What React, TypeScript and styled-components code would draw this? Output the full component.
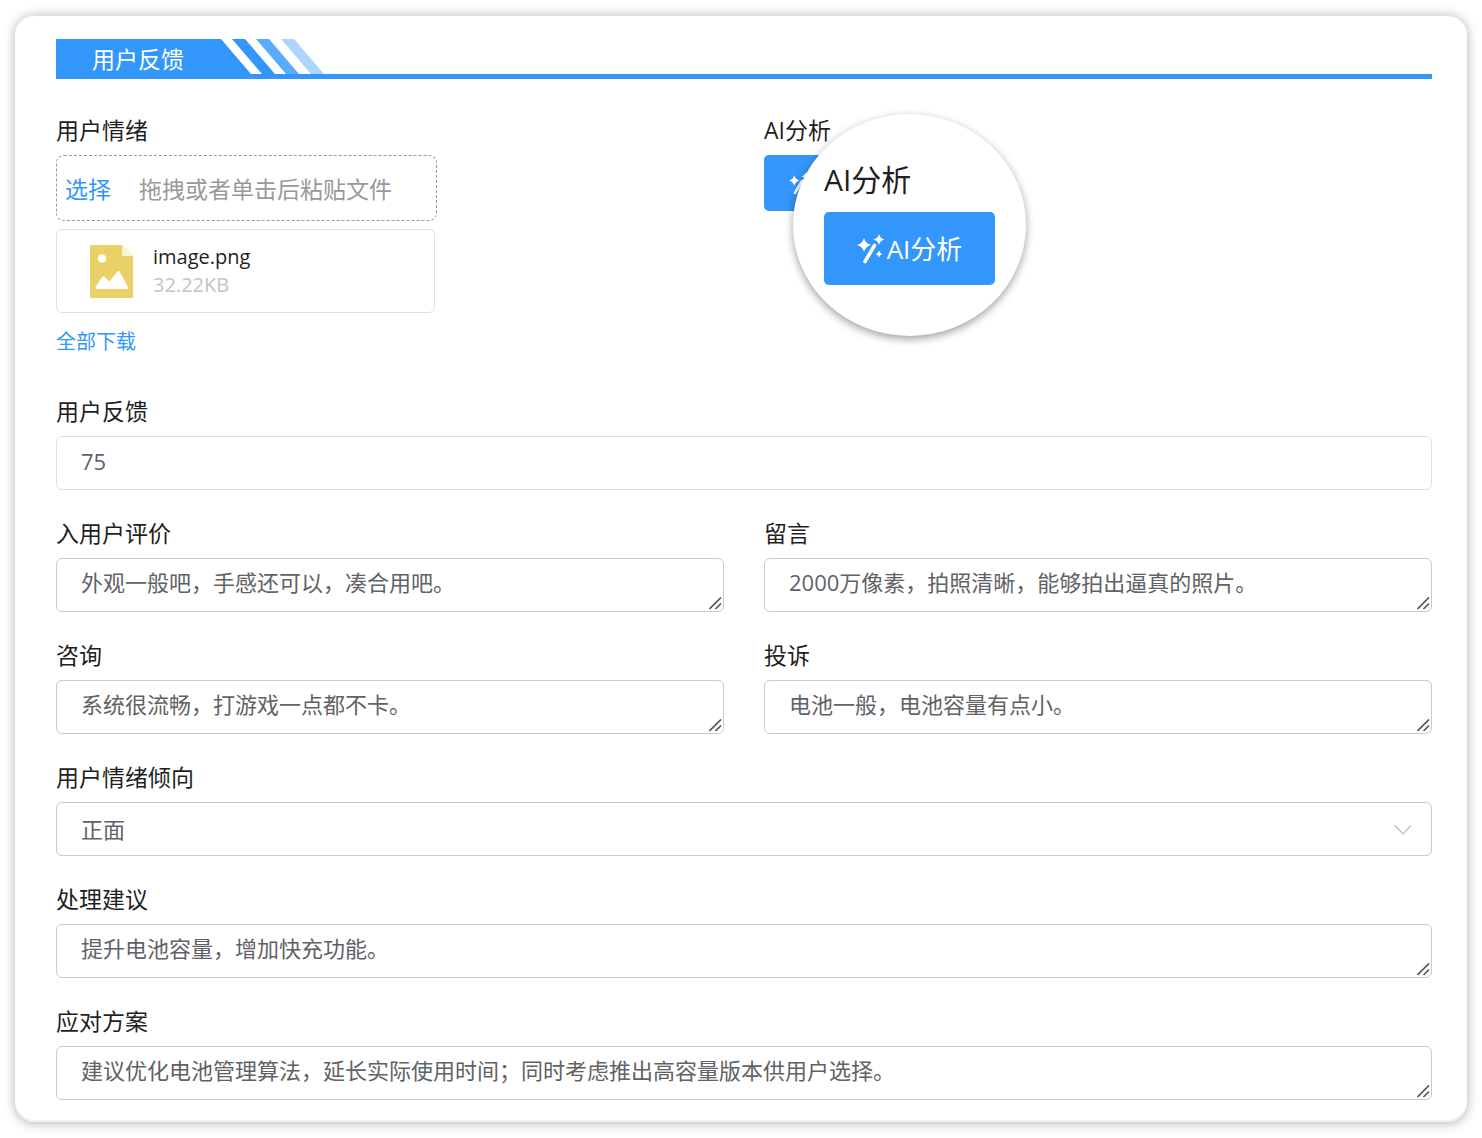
import React, { useId, useState } from 'react';
import styled, { createGlobalStyle, css } from 'styled-components';

const BLUE = '#3296fa';
const FONT = `'Open Sans', 'Noto Sans CJK SC', sans-serif`;

const GlobalStyle = createGlobalStyle`
  *, *::before, *::after { box-sizing: border-box; }
  body { margin: 0; background: #fff; font-family: ${FONT}; color: #1f1f1f; }
  button, input, select, textarea { font-family: inherit; margin: 0; }
`;

const Page = styled.div`
  padding: 15px;
`;

const Card = styled.main`
  padding: 24px 35px 22px 41px;
  border-radius: 20px;
  background: #fff;
  box-shadow: 0 1px 12px rgba(0, 0, 0, 0.32), inset 0 2px 0 -1px #e4e4e4, inset 0 -2px 0 #f0f0f4;
`;

const SectionHeader = styled.header`
  display: flex;
  height: 40px;
  margin-bottom: 36px;
  border-bottom: 5px solid ${BLUE};
`;

const SectionTitle = styled.h1`
  margin: 0;
  width: 196px;
  height: 40px;
  padding-left: 36px;
  background: ${BLUE};
  clip-path: polygon(0 0, 165px 0, 195px 35px, 195px 40px, 0 40px);
  color: #fff;
  font-size: 23px;
  font-weight: 400;
  line-height: 40px;
`;

const Stripes = styled.svg`
  display: block;
  width: 93px;
  height: 35px;
  margin-left: -20px;
`;

const Form = styled.form`
  display: grid;
  grid-template-columns: repeat(2, minmax(0, 1fr));
  gap: 28px 40px;
`;

const FieldBox = styled.div<{ $wide?: boolean }>`
  position: relative;
  display: flex;
  flex-direction: column;
  align-items: flex-start;
  gap: 8px;
  min-width: 0;
  ${(p) => p.$wide && css`grid-column: 1 / -1;`}
`;

const labelText = css`
  padding-bottom: 2px;
  font-size: 23px;
  line-height: 30px;
  color: #1f1f1f;
`;

const Label = styled.label`
  ${labelText}
`;

const GroupLabel = styled.span`
  ${labelText}
`;

const ControlWrap = styled.div`
  position: relative;
  display: flex;
  width: 100%;
`;

const controlStyle = css`
  display: block;
  width: 100%;
  height: 54px;
  padding: 8px 24px 12px;
  border: 1px solid #c4cadc;
  border-radius: 6px;
  outline: 0;
  background: #fff;
  color: #606266;
  font-size: 22px;
  line-height: 30px;
  &:focus { border-color: ${BLUE}; }
`;

const TextInput = styled.input`
  ${controlStyle}
  border-color: #dcdfe6;
`;

const TextArea = styled.textarea`
  ${controlStyle}
  resize: vertical;
  overflow: hidden;
  &::-webkit-resizer { display: none; }
`;

const Select = styled.select`
  ${controlStyle}
  padding: 10px 24px;
  appearance: none;
`;

const Grip = styled.svg`
  position: absolute;
  right: 2px;
  bottom: 2px;
  width: 13px;
  height: 13px;
  pointer-events: none;
`;

const Chevron = styled.svg`
  position: absolute;
  top: 18px;
  right: 19px;
  width: 20px;
  height: 20px;
  pointer-events: none;
`;

const DropZone = styled.div`
  display: flex;
  align-items: center;
  gap: 28px;
  width: 381px;
  max-width: 100%;
  height: 66px;
  padding: 2px 8px 0;
  border: 1px dashed #999;
  border-radius: 8px;
  color: #999;
  font-size: 23px;
  line-height: 32px;
  white-space: nowrap;
`;

const PickButton = styled.button`
  padding: 0;
  border: 0;
  background: none;
  color: ${BLUE};
  font-size: 23px;
  line-height: 32px;
  cursor: pointer;
`;

const FileCard = styled.div`
  display: flex;
  align-items: center;
  gap: 20px;
  width: 379px;
  max-width: 100%;
  height: 84px;
  padding: 0 33px;
  border: 1px solid #dcdfe6;
  border-radius: 6px;
`;

const FileIcon = styled.svg`
  display: block;
  width: 43px;
  height: 54px;
`;

const FileText = styled.div`
  display: flex;
  flex-direction: column;
  font-size: 20px;
  line-height: 28px;
`;

const FileSize = styled.span`
  color: #c0c4cc;
`;

const DownloadLink = styled.a`
  padding: 5px 0 10px;
  color: ${BLUE};
  font-size: 20px;
  line-height: 32px;
  text-decoration: none;
`;

const AiButton = styled.button<{ $large?: boolean }>`
  display: flex;
  align-items: center;
  justify-content: center;
  gap: 2px;
  width: ${(p) => (p.$large ? 171 : 131)}px;
  height: ${(p) => (p.$large ? 73 : 56)}px;
  padding: 0;
  border: 0;
  border-radius: 5px;
  background: ${BLUE};
  color: #fff;
  font-size: ${(p) => (p.$large ? 26 : 20)}px;
  line-height: 32px;
  cursor: pointer;
`;

const WandSvg = styled.svg<{ $large?: boolean }>`
  width: ${(p) => (p.$large ? 28 : 21)}px;
  height: ${(p) => (p.$large ? 30 : 23)}px;
`;

const Lens = styled.div`
  position: absolute;
  top: -1px;
  left: 29px;
  display: flex;
  flex-direction: column;
  align-items: flex-start;
  gap: 12px;
  width: 233px;
  height: 222px;
  padding: 46px 0 0 31px;
  border-radius: 50%;
  background: #fff;
  box-shadow: 0 3px 8px rgba(0, 0, 0, 0.38);
`;

const LensTitle = styled.span`
  color: #1f1f1f;
  font-size: 30px;
  line-height: 40px;
`;

function WandIcon({ large }: { large?: boolean }) {
  return (
    <WandSvg $large={large} viewBox="0 0 28 30" aria-hidden="true">
      <path
        fill="#fff"
        d="M7 4Q8.500 9.500 14 11Q8.500 12.500 7 18Q5.500 12.500 0 11Q5.500 9.500 7 4ZM22 0Q23 4.500 27.500 5.500Q23 6.500 22 11Q21 6.500 16.500 5.500Q21 4.500 22 0ZM22 16.500Q22.800 19.200 25.500 20Q22.800 20.800 22 23.500Q21.200 20.800 18.500 20Q21.200 19.200 22 16.500Z"
      />
      <path d="M17.500 11.500L8 27.500" stroke="#fff" strokeWidth="3.600" strokeLinecap="round" />
    </WandSvg>
  );
}

function AreaField({ label, value, wide }: { label: string; value: string; wide?: boolean }) {
  const id = useId();
  const [text, setText] = useState(value);
  return (
    <FieldBox $wide={wide}>
      <Label htmlFor={id}>{label}</Label>
      <ControlWrap>
        <TextArea id={id} rows={1} value={text} onChange={(e) => setText(e.target.value)} />
        <Grip viewBox="0 0 13 13" aria-hidden="true">
          <path d="M.5 12L12 .5M6.500 12L12 6.500" fill="none" stroke="#555" strokeWidth="1.700" />
        </Grip>
      </ControlWrap>
    </FieldBox>
  );
}

export default function App() {
  const [score, setScore] = useState('75');
  const [mood, setMood] = useState('正面');

  return (
    <>
      <GlobalStyle />
      <Page>
        <Card>
          <SectionHeader>
            <SectionTitle>用户反馈</SectionTitle>
            <Stripes viewBox="0 0 93 35" aria-hidden="true">
              <path d="M0 0H13L43 35H30Z" fill={BLUE} />
              <path d="M24 0H37L67 35H54Z" fill="#5babfb" />
              <path d="M49 0H62L92 35H79Z" fill="#add5fd" />
            </Stripes>
          </SectionHeader>

          <Form onSubmit={(e) => e.preventDefault()}>
            <FieldBox>
              <GroupLabel>用户情绪</GroupLabel>
              <DropZone>
                <PickButton type="button">选择</PickButton>
                <span>拖拽或者单击后粘贴文件</span>
              </DropZone>
              <FileCard>
                <FileIcon viewBox="0 0 43 54" aria-hidden="true">
                  <path d="M1 1H32L43 12V53Q43 54 42 54H1Q0 54 0 53V2Q0 1 1 1Z" fill="#e9d168" />
                  <path d="M32 1L43 12H33Q32 12 32 11Z" fill="#fdf3cd" />
                  <circle cx="12" cy="14.500" r="4.200" fill="#fff" />
                  <path d="M5.500 43L12 33Q13 31.500 14.200 32.800L19.500 37.500L27.500 27.500Q28.500 26 29.500 27.500L38 43Q38.500 45 37 45H6.500Q5 45 5.500 43Z" fill="#fff" />
                </FileIcon>
                <FileText>
                  <span>image.png</span>
                  <FileSize>32.22KB</FileSize>
                </FileText>
              </FileCard>
              <DownloadLink href="#download">全部下载</DownloadLink>
            </FieldBox>

            <FieldBox>
              <GroupLabel>AI分析</GroupLabel>
              <AiButton type="button">
                <WandIcon />
                AI分析
              </AiButton>
              <Lens>
                <LensTitle>AI分析</LensTitle>
                <AiButton type="button" $large>
                  <WandIcon large />
                  AI分析
                </AiButton>
              </Lens>
            </FieldBox>

            <FieldBox $wide>
              <Label htmlFor="score">用户反馈</Label>
              <TextInput id="score" value={score} onChange={(e) => setScore(e.target.value)} />
            </FieldBox>

            <AreaField label="入用户评价" value="外观一般吧，手感还可以，凑合用吧。" />
            <AreaField label="留言" value="2000万像素，拍照清晰，能够拍出逼真的照片。" />
            <AreaField label="咨询" value="系统很流畅，打游戏一点都不卡。" />
            <AreaField label="投诉" value="电池一般，电池容量有点小。" />

            <FieldBox $wide>
              <Label htmlFor="mood">用户情绪倾向</Label>
              <ControlWrap>
                <Select id="mood" value={mood} onChange={(e) => setMood(e.target.value)}>
                  <option>正面</option>
                </Select>
                <Chevron viewBox="0 0 20 20" aria-hidden="true">
                  <path d="M2 5.500L10 14L18 5.500" fill="none" stroke="#c0c4cc" strokeWidth="1.500" />
                </Chevron>
              </ControlWrap>
            </FieldBox>

            <AreaField wide label="处理建议" value="提升电池容量，增加快充功能。" />
            <AreaField
              wide
              label="应对方案"
              value="建议优化电池管理算法，延长实际使用时间；同时考虑推出高容量版本供用户选择。"
            />
          </Form>
        </Card>
      </Page>
    </>
  );
}
